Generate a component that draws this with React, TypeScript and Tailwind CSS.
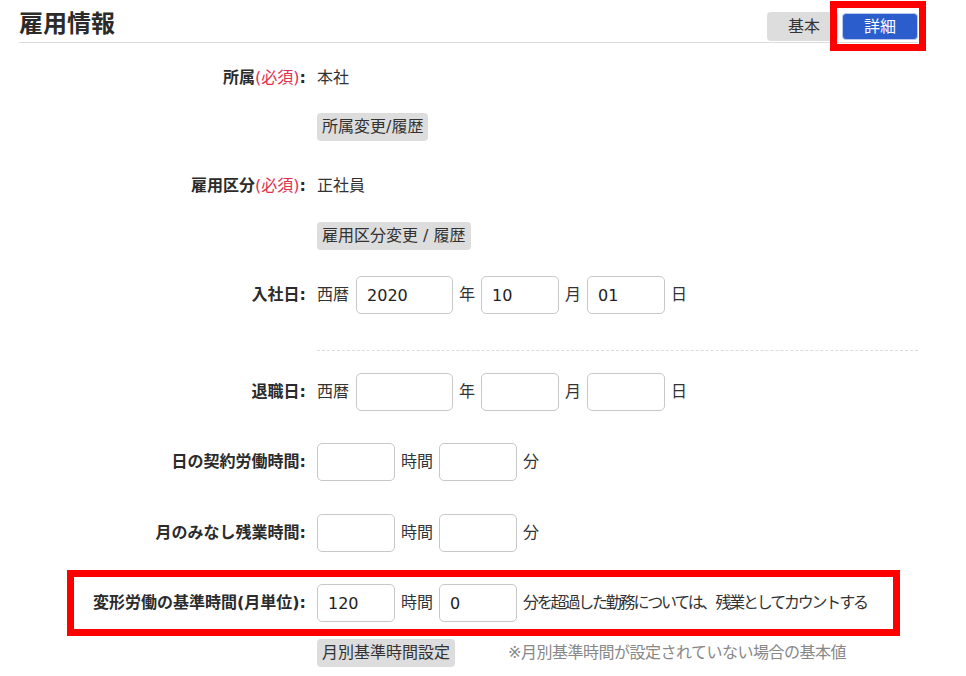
import React from "react";

const FONT = "font-['DejaVu_Sans','Noto_Sans_CJK_JP',sans-serif]";

function Label({ text, required }: { text: string; required?: boolean }) {
  return (
    <div className="w-[287px] shrink-0 text-right font-bold text-[16px] leading-[24px] text-[#2b2b2b] whitespace-nowrap">
      {text}
      {required && <span className="font-normal text-[#e2304f]">(必須)</span>}
      :
    </div>
  );
}

function Row({
  label,
  required,
  children,
  className,
}: {
  label?: string;
  required?: boolean;
  children: React.ReactNode;
  className?: string;
}) {
  return (
    <div className={`flex items-center ${className ?? ""}`}>
      {label !== undefined ? <Label text={label} required={required} /> : <div className="w-[287px] shrink-0" />}
      <div className="ml-[11px] flex items-center gap-[6px] text-[16px] leading-[24px] text-[#333] whitespace-nowrap">
        {children}
      </div>
    </div>
  );
}

function Field({ w, value }: { w: string; value?: string }) {
  return (
    <input
      readOnly
      value={value ?? ""}
      className={`${w} h-[38px] rounded-[5px] border border-[#c8c8c8] bg-white pl-[10px] text-[16px] text-[#222] outline-none ${FONT}`}
    />
  );
}

function GrayButton({ children }: { children: React.ReactNode }) {
  return (
    <button className={`h-[28px] rounded-[4px] bg-[#dddddd] px-[5px] text-[16px] leading-[28px] text-[#333] whitespace-nowrap ${FONT}`}>
      {children}
    </button>
  );
}

export default function App() {
  return (
    <div className={`w-[966px] h-[676px] bg-white ${FONT} overflow-hidden`}>
      <div className="ml-[19px] w-[899px]">
        {/* Header */}
        <div className="relative flex h-[43px] items-start justify-between border-b border-[#dcdcdc]">
          <h1 className="pt-[8px] text-[24px] font-bold leading-[32px] text-[#2b2b2b]">雇用情報</h1>
          <div className="mt-[12px] flex items-center gap-[4px]">
            <button className={`h-[29px] w-[71px] rounded-[4px] bg-[#dddddd] pl-[3px] text-[16px] text-[#333] ${FONT}`}>基本</button>
            <button className={`h-[27px] w-[76px] rounded-[4px] border border-[#b9c8ec] bg-[#2b5dcd] text-[16px] text-white ${FONT}`}>詳細</button>
          </div>
          <div className="pointer-events-none absolute left-[811px] top-[1px] h-[50px] w-[96px] border-[7px] border-[#ff0000]" />
        </div>

        <Row label="所属" required className="mt-[23px] h-[24px]">
          <span>本社</span>
        </Row>
        <Row className="mt-[23px] h-[28px]">
          <GrayButton>所属変更/履歴</GrayButton>
        </Row>

        <Row label="雇用区分" required className="mt-[33px] h-[24px]">
          <span>正社員</span>
        </Row>
        <Row className="mt-[24px] h-[28px]">
          <GrayButton>雇用区分変更 / 履歴</GrayButton>
        </Row>

        <Row label="入社日" className="mt-[26px] h-[38px]">
          <span className="mr-[1px]">西暦</span>
          <Field w="w-[97px]" value="2020" />
          <span>年</span>
          <Field w="w-[78px]" value="10" />
          <span>月</span>
          <Field w="w-[78px]" value="01" />
          <span>日</span>
        </Row>

        <div className="mt-[36px] ml-[298px] border-t border-dashed border-[#dddddd]" />

        <Row label="退職日" className="mt-[22px] h-[38px]">
          <span className="mr-[1px]">西暦</span>
          <Field w="w-[97px]" />
          <span>年</span>
          <Field w="w-[78px]" />
          <span>月</span>
          <Field w="w-[78px]" />
          <span>日</span>
        </Row>

        <Row label="日の契約労働時間" className="mt-[32px] h-[38px]">
          <Field w="w-[78px]" />
          <span>時間</span>
          <Field w="w-[78px]" />
          <span>分</span>
        </Row>

        <Row label="月のみなし残業時間" className="mt-[33px] h-[38px]">
          <Field w="w-[78px]" />
          <span>時間</span>
          <Field w="w-[78px]" />
          <span>分</span>
        </Row>

        <div className="relative mt-[32px]">
          <Row label="変形労働の基準時間(月単位)" className="h-[38px]">
            <Field w="w-[78px]" value="120" />
            <span>時間</span>
            <Field w="w-[78px]" value="0" />
            <span className="[letter-spacing:-2.2px]">分を超過した勤務については、残業としてカウントする</span>
          </Row>
          <div className="pointer-events-none absolute -top-[14px] -bottom-[14px] left-[48px] right-[18px] border-[7px] border-[#ff0000]" />
        </div>

        <div className="mt-[17px] flex h-[28px] items-center">
          <div className="w-[298px] shrink-0" />
          <GrayButton>月別基準時間設定</GrayButton>
          <span className="ml-[53px] text-[16px] leading-[24px] [letter-spacing:-0.5px] text-[#888] whitespace-nowrap">
            ※月別基準時間が設定されていない場合の基本値
          </span>
        </div>
      </div>
    </div>
  );
}
